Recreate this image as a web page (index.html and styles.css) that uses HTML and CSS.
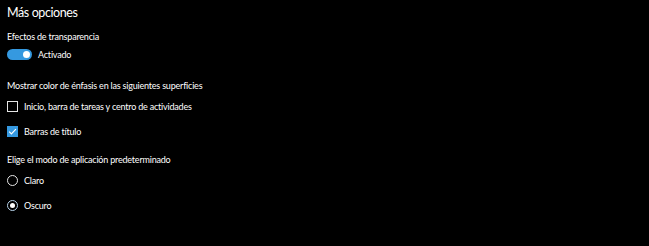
FILE: index.html
```html
<!DOCTYPE html>
<html lang="es">
<head>
    <meta charset="UTF-8">
    <title>Más opciones</title>
    <link rel="stylesheet" href="styles.css">
</head>
<body>
<div class="page">
    <h1 class="title">Más opciones</h1>

    <div class="group">
        <div class="label">Efectos de transparencia</div>
        <div class="toggle-row">
            <span class="toggle on"><span class="knob"></span></span>
            <span class="opt-text">Activado</span>
        </div>
    </div>

    <div class="group accent">
        <div class="label">Mostrar color de énfasis en las siguientes superficies</div>
        <div class="opt">
            <span class="check"></span>
            <span class="opt-text">Inicio, barra de tareas y centro de actividades</span>
        </div>
        <div class="opt">
            <span class="check checked">
                <svg viewBox="0 0 11 11" width="11" height="11"><path d="M2.2 5.6 L4.4 7.8 L8.9 3.1" fill="none" stroke="#fff" stroke-width="1.2"/></svg>
            </span>
            <span class="opt-text">Barras de título</span>
        </div>
    </div>

    <div class="group mode">
        <div class="label">Elige el modo de aplicación predeterminado</div>
        <div class="opt">
            <span class="radio"></span>
            <span class="opt-text">Claro</span>
        </div>
        <div class="opt">
            <span class="radio selected"><span class="dot"></span></span>
            <span class="opt-text">Oscuro</span>
        </div>
    </div>
</div>
</body>
</html>
```

FILE: styles.css
```css
body {
    margin: 0;
    background: #000;
    color: #fff;
    font-family: 'Segoe UI', Lato, 'Open Sans', sans-serif;
}
.page {
    padding: 3px 7px 0;
}
.title {
    font-size: 12.5px;
    font-weight: 400;
    letter-spacing: -0.4px;
    margin: 0;
    line-height: 20px;
}
.group {
    margin-top: 6px;
}
.accent {
    margin-top: 17px;
}
.mode {
    margin-top: 8px;
}
.label,
.opt-text {
    font-size: 9px;
    letter-spacing: -0.2px;
}
.label {
    line-height: 16px;
}
.toggle-row {
    display: flex;
    align-items: center;
    gap: 6px;
    margin-top: 2px;
    height: 14px;
}
.toggle {
    display: flex;
    align-items: center;
    justify-content: flex-end;
    width: 25px;
    height: 11px;
    border-radius: 6px;
    background: #3599e0;
    box-sizing: border-box;
    padding-right: 2px;
}
.knob {
    width: 7px;
    height: 7px;
    border-radius: 50%;
    background: #fff;
}
.opt {
    display: flex;
    align-items: center;
    gap: 6px;
    height: 25px;
}
.check {
    width: 11px;
    height: 11px;
    box-sizing: border-box;
    border: 1px solid #e6e6e6;
    display: flex;
}
.check.checked {
    border: none;
    background: #3599e0;
}
.radio {
    width: 11px;
    height: 11px;
    box-sizing: border-box;
    border-radius: 50%;
    border: 1px solid #e6e6e6;
    display: flex;
    align-items: center;
    justify-content: center;
}
.radio.selected {
    border: 1.5px solid #b7d3ea;
}
.dot {
    width: 5px;
    height: 5px;
    border-radius: 50%;
    background: #fff;
}
```
